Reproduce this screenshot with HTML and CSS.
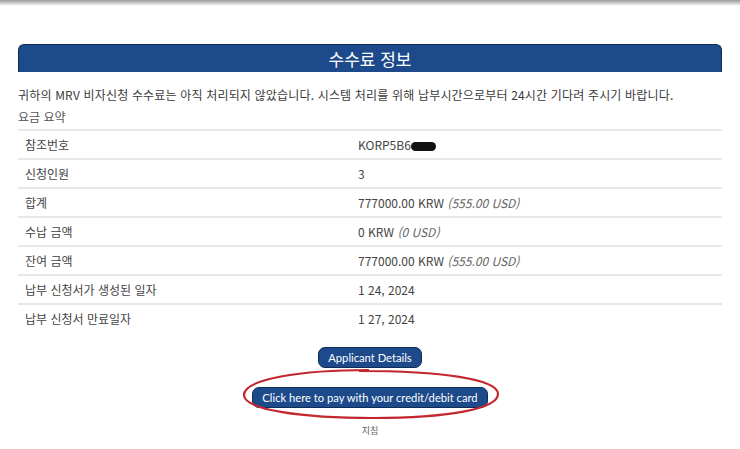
FILE: index.html
```html
<!DOCTYPE html>
<html lang="ko">
<head>
    <meta charset="UTF-8">
    <title>수수료 정보</title>
    <link rel="stylesheet" href="styles.css">
</head>
<body>
<div class="topbar"></div>

<div class="container">
    <div class="header">수수료 정보</div>

    <p class="notice">귀하의 MRV 비자신청 수수료는 아직 처리되지 않았습니다. 시스템 처리를 위해 납부시간으로부터 24시간 기다려 주시기 바랍니다.</p>
    <p class="summary">요금 요약</p>

    <table class="fees">
        <tr><td>참조번호</td><td>KORP5B6<span class="mask"></span></td></tr>
        <tr><td>신청인원</td><td>3</td></tr>
        <tr><td>합계</td><td>777000.00 KRW <em>(555.00 USD)</em></td></tr>
        <tr><td>수납 금액</td><td>0 KRW <em>(0 USD)</em></td></tr>
        <tr><td>잔여 금액</td><td>777000.00 KRW <em>(555.00 USD)</em></td></tr>
        <tr><td>납부 신청서가 생성된 일자</td><td>1 24, 2024</td></tr>
        <tr><td>납부 신청서 만료일자</td><td>1 27, 2024</td></tr>
    </table>

    <div class="actions">
        <button class="btn">Applicant Details</button>
        <div class="pay">
            <button class="btn">Click here to pay with your credit/debit card</button>
            <!-- 빨간 원 표시 -->
            <svg class="circle" width="260" height="54" viewBox="0 0 260 54">
                <path d="M128 3 C 60 3, 3 12, 3 28 C 3 43, 62 51, 132 51 C 206 51, 257 42, 257 27 C 257 12, 200 4, 118 4"
                      fill="none" stroke="#c3272e" stroke-width="2.2"/>
            </svg>
        </div>
        <div class="guide">지침</div>
    </div>
</div>
</body>
</html>
```

FILE: styles.css
```css
body {
    margin: 0;
    font-family: "Noto Sans CJK KR", "Noto Sans", sans-serif;
    color: #444;
    background-color: #fff;
}
.topbar {
    height: 6px;
    background: linear-gradient(#9a9a9a, #d6d6d6 60%, #fff);
}
.container {
    margin: 38px 18px 0;
}
.header {
    height: 27px;
    background-color: #1d4a8b;
    border: 1px solid #0e2c58;
    border-bottom: none;
    border-radius: 6px 6px 0 0;
    color: #fff;
    text-align: center;
    font-size: 17px;
    line-height: 27px;
}
.notice {
    margin: 14px 0 0;
    font-size: 12px;
    line-height: 18px;
    letter-spacing: 0.17px;
    color: #3a3a3a;
}
.summary {
    margin: 4px 0 0;
    font-size: 12px;
    line-height: 18px;
    color: #555;
}
.fees {
    width: 100%;
    border-collapse: collapse;
    margin-top: 3px;
}
.fees td {
    border-top: 2px solid #e8e8e8;
    height: 27px;
    padding: 0 7px;
    font-size: 12px;
    color: #444;
}
.fees td:first-child {
    width: 319px;
}
.fees em {
    color: #666;
}
.mask {
    display: inline-block;
    width: 25px;
    height: 9px;
    background-color: #111;
    border-radius: 5px;
    vertical-align: -1px;
}
.actions {
    display: flex;
    flex-direction: column;
    align-items: center;
    margin-top: 15px;
}
.btn {
    font-family: Lato, "Open Sans", sans-serif;
    font-size: 11.2px;
    color: #fff;
    background-color: #1d4a8b;
    border: 1px solid #0e2c58;
    border-radius: 7px;
    padding: 0 9px;
    height: 21px;
    line-height: 19px;
}
.pay {
    position: relative;
    margin-top: 15px;
}
.circle {
    position: absolute;
    left: -11px;
    top: -16px;
}
.guide {
    margin-top: 16px;
    font-size: 9px;
    color: #666;
}
```
